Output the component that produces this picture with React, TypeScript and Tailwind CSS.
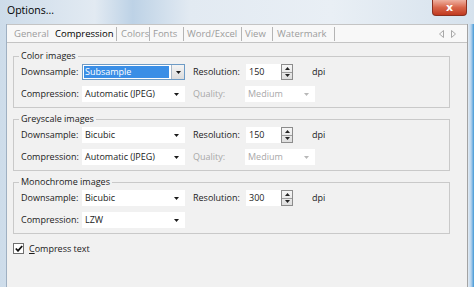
import React from "react";

const Arrow = ({ color = "#1a1a1a" }: { color?: string }) => (
    <svg width="5" height="3" viewBox="0 0 5 3">
        <path d="M0 0 H5 L2.5 3 Z" fill={color} />
    </svg>
);

const Combo = ({
    value,
    width,
    disabled,
    focused,
}: {
    value: string;
    width: string;
    disabled?: boolean;
    focused?: boolean;
}) => {
    if (focused) {
        return (
            <div className={`${width} h-[16px] flex items-center bg-white border border-[#6d9bc6]`}>
                <div className="flex-1 h-[12px] ml-[1px] bg-[#3a8ee6] text-white flex items-center pl-[1px]">
                    {value}
                </div>
                <div className="w-[13px] h-[14px] ml-[2px] flex items-center justify-center bg-gradient-to-b from-[#f4f4f4] to-[#dcdcdc] border-l border-[#a9b8c8]">
                    <Arrow />
                </div>
            </div>
        );
    }
    return (
        <div className={`${width} h-[16px] flex items-center justify-between bg-white pl-[3px] pr-[6px]`}>
            <span className={disabled ? "text-[#a8a8a8]" : ""}>{value}</span>
            <Arrow color={disabled ? "#b8b8b8" : "#1a1a1a"} />
        </div>
    );
};

const Spin = ({ value }: { value: string }) => (
    <div className="flex items-center h-[16px]">
        <div className="w-[35px] h-[16px] bg-white pl-[3px] flex items-center">{value}</div>
        <div className="w-[12px] h-[16px] border border-[#8c8c8c] bg-gradient-to-b from-[#f6f6f6] to-[#dedede] flex flex-col">
            <div className="flex-1 flex items-center justify-center border-b border-[#9c9c9c]">
                <svg width="5" height="3" viewBox="0 0 5 3">
                    <path d="M0 3 H5 L2.5 0 Z" fill="#222" />
                </svg>
            </div>
            <div className="flex-1 flex items-center justify-center">
                <svg width="5" height="3" viewBox="0 0 5 3">
                    <path d="M0 0 H5 L2.5 3 Z" fill="#222" />
                </svg>
            </div>
        </div>
    </div>
);

const Group = ({
    title,
    downsample,
    compression,
    resolution,
    quality,
    focused,
}: {
    title: string;
    downsample: string;
    compression: string;
    resolution: string;
    quality?: boolean;
    focused?: boolean;
}) => (
    <fieldset className="w-[437px] border border-[#c9c9c9] pl-[5px] pt-[2px] pb-[5px] flex flex-col gap-[6px]">
        <legend className="px-[2px] leading-[12px]">{title}</legend>
        <div className="flex items-center h-[16px] ml-[2px]">
            <span className="w-[61px]">Downsample:</span>
            <Combo value={downsample} width="w-[103px]" focused={focused} />
            <span className="w-[53px] ml-[8px]">Resolution:</span>
            <Spin value={resolution} />
            <span className="ml-[19px]">dpi</span>
        </div>
        <div className="flex items-center h-[16px] ml-[2px]">
            <span className="w-[61px]">Compression:</span>
            <Combo value={compression} width="w-[103px]" />
            {quality && (
                <>
                    <span className="w-[52px] ml-[8px] text-[#a8a8a8]">Quality:</span>
                    <Combo value="Medium" width="w-[70px]" disabled />
                </>
            )}
        </div>
    </fieldset>
);

const tabs = [
    { label: "General", w: "w-[45px]", pl: "pl-[7px]", sep: false },
    { label: "Compression", w: "w-[65px]", pl: "pl-[3px]", sep: true, active: true },
    { label: "Colors", w: "w-[33px]", pl: "pl-[4px]", sep: true },
    { label: "Fonts", w: "w-[34px]", pl: "pl-[3px]", sep: true },
    { label: "Word/Excel", w: "w-[58px]", pl: "pl-[3px]", sep: true },
    { label: "View", w: "w-[31px]", pl: "pl-[3px]", sep: true },
    { label: "Watermark", w: "w-[62px]", pl: "pl-[4px]", sep: true },
];

const App = () => {
    return (
        <div className="w-[474px] h-[287px] overflow-hidden flex flex-col font-['Open_Sans',sans-serif] text-[9px] text-[#1b1b1b] bg-[linear-gradient(90deg,#cddcea_0%,#e2eaf2_20%,#bdd2e6_28%,#e2eaf2_40%,#e9eff5_70%,#d6e2ed_100%)]">
            {/* title bar */}
            <div className="h-[24px] relative flex items-center pl-[7px] pb-[2px]">
                <span className="text-[10.5px] text-black">Options...</span>
                <div className="absolute top-0 right-[7px] w-[35px] h-[16px] rounded-b-[4px] border border-t-0 border-[#8a3020] bg-gradient-to-b from-[#eeb0a0] via-[#d8654a] to-[#c0391f] flex items-center justify-center">
                    <span className="text-white text-[11px] font-bold leading-none -mt-[1px] font-['DejaVu_Sans',sans-serif]">x</span>
                </div>
            </div>

            <div className="flex-1 flex">
                <div className="w-[7px] border-r border-[#9fb0c2]" />

                <div className="w-[460px] flex flex-col">
                    {/* tab strip */}
                    <div className="h-[19px] bg-[#f8f8f8] border-y border-[#c4c4c4] flex items-center text-[9.5px]">
                        {tabs.map((t) => (
                            <div
                                key={t.label}
                                className={`${t.w} ${t.pl} h-[14px] leading-[14px] whitespace-nowrap overflow-hidden ${
                                    t.sep ? "border-r border-[#b4b4b4]" : ""
                                } ${t.active ? "text-black" : "text-[#9c9c9c]"}`}
                            >
                                {t.label}
                            </div>
                        ))}
                        <div className="flex-1" />
                        <div className="flex items-center gap-[7px] mr-[11px]">
                            <svg width="5" height="8" viewBox="0 0 5 8">
                                <path d="M4.5 0.5 L0.5 4 L4.5 7.5 Z" fill="none" stroke="#a8a8a8" />
                            </svg>
                            <svg width="5" height="8" viewBox="0 0 5 8">
                                <path d="M0.5 0.5 L4.5 4 L0.5 7.5 Z" fill="none" stroke="#a8a8a8" />
                            </svg>
                        </div>
                    </div>

                    {/* panel */}
                    <div className="flex-1 bg-[#f1f1f1] px-[6px] pt-[7px] flex flex-col gap-[5px]">
                        <Group
                            title="Color images"
                            downsample="Subsample"
                            compression="Automatic (JPEG)"
                            resolution="150"
                            quality
                            focused
                        />
                        <Group
                            title="Greyscale images"
                            downsample="Bicubic"
                            compression="Automatic (JPEG)"
                            resolution="150"
                            quality
                        />
                        <Group
                            title="Monochrome images"
                            downsample="Bicubic"
                            compression="LZW"
                            resolution="300"
                        />
                        <div className="flex items-center h-[13px] mt-[3px]">
                            <div className="w-[11px] h-[11px] border border-[#707070] bg-white flex items-center justify-center">
                                <svg width="8" height="7" viewBox="0 0 8 7">
                                    <path d="M0.8 3.5 L3 5.8 L7.2 1" fill="none" stroke="#111" strokeWidth="1.8" />
                                </svg>
                            </div>
                            <span className="ml-[5px]">
                                <span className="underline">C</span>ompress text
                            </span>
                        </div>
                    </div>
                </div>

                <div className="w-[7px] border-l border-[#a3a3a3] bg-gradient-to-r from-[#e3ebf3] via-[#b7d3ec] to-[#3d98d6]" />
            </div>
        </div>
    );
};

export default App;
